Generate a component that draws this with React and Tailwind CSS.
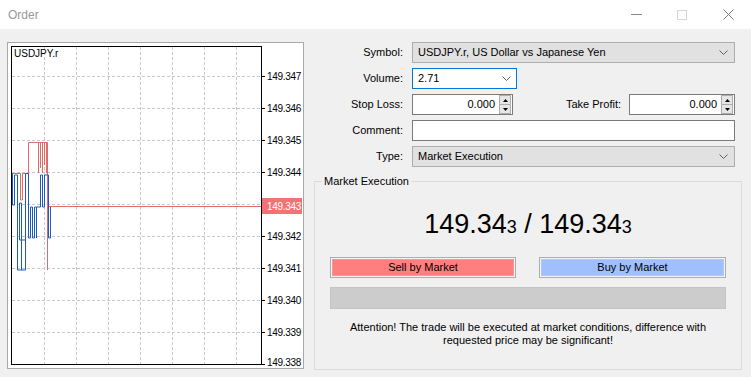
import React from "react";

const levels = ["149.347", "149.346", "149.345", "149.344", "149.343", "149.342", "149.341", "149.340", "149.339"];
const vLines = [36, 68, 100, 132, 164, 196, 228];

const Chevron = () => (
  <svg width="9" height="5" viewBox="0 0 9 5" className="shrink-0">
    <polyline points="0.5,0.5 4.5,4.5 8.5,0.5" fill="none" stroke="#606060" strokeWidth="1" />
  </svg>
);

const Spinner = () => (
  <div className="flex h-[19px] w-[12px] flex-col">
    <div className="flex flex-1 items-center justify-center border border-[#adadad] bg-[#e5e5e5]">
      <svg width="5" height="3" viewBox="0 0 5 3"><polygon points="2.5,0 5,3 0,3" fill="#000" /></svg>
    </div>
    <div className="-mt-px flex flex-1 items-center justify-center border border-[#adadad] bg-[#e5e5e5]">
      <svg width="5" height="3" viewBox="0 0 5 3"><polygon points="0,0 5,0 2.5,3" fill="#000" /></svg>
    </div>
  </div>
);

const Chart = () => (
  <div className="h-[327px] w-[297px] border border-[#a9a9a9] bg-white">
    <svg width="295" height="325" viewBox="0 0 295 325" className="block font-['Liberation_Sans',Arial,sans-serif]">
      {vLines.map((x) => (
        <line key={x} x1={x + 0.5} y1="4" x2={x + 0.5} y2="321" stroke="#c8c8c8" strokeDasharray="3 2" />
      ))}
      {levels.map((lv, i) => (
        <line key={lv} x1="4" y1={33.5 + i * 32} x2="253" y2={33.5 + i * 32} stroke="#c8c8c8" strokeDasharray="3 2" />
      ))}

      {/* ask */}
      <path
        d="M4 130.5 H12.5 V157 H14.5 V130.5 H20.5 V99.5 H39.5 V227 M30.5 99.5 V130 M32.5 99.5 V125 M34.5 99.5 V130 M36.5 99.5 V122 M38.5 99.5 V130 H39.5"
        fill="none"
        stroke="#e06a6a"
      />
      <line x1="39" y1="163.5" x2="254" y2="163.5" stroke="#e06a6a" />

      {/* bid */}
      <path
        d="M4.5 130.5 V162 H6.5 V132 H9.5 V227 H17.5 V197 H11.5 V160 H13.5 V227 M17.5 197 V130.5 H20.5 V195 H22.5 V164 H24.5 V195 H26.5 V164 H28.5 V195 V164 H32.5 V132 H34.5 V164 H36.5 V132 H40.5 V195 H42.5 V164"
        fill="none"
        stroke="#1c5cc0"
      />

      <rect x="3.5" y="3.5" width="250" height="318" fill="none" stroke="#000" />

      <text x="6" y="14" fontSize="10" fill="#000">USDJPY.r</text>

      {levels.map((lv, i) =>
        lv === "149.343" ? null : (
          <g key={lv}>
            <line x1="254" y1={33.5 + i * 32} x2="257" y2={33.5 + i * 32} stroke="#000" />
            <text x="259" y={37 + i * 32} fontSize="10" letterSpacing="-0.3" fill="#000">{lv}</text>
          </g>
        )
      )}
      <line x1="254" y1="321.5" x2="257" y2="321.5" stroke="#000" />
      <text x="259" y="323" fontSize="10" letterSpacing="-0.3" fill="#000">149.338</text>

      <rect x="254" y="155" width="40" height="16" fill="#f07474" />
      <text x="259" y="167" fontSize="10" letterSpacing="-0.3" fill="#fff">149.343</text>
    </svg>
  </div>
);

const Label = ({ children }) => <div className="flex items-center justify-end text-[11px] text-black">{children}</div>;

export default function App() {
  return (
    <div className="h-[377px] w-[751px] overflow-hidden bg-[#f0f0f0] font-['Liberation_Sans',Arial,sans-serif] text-[11px] text-black">
      <div className="flex h-[29px] items-center justify-between bg-white pl-[8px]">
        <span className="text-[12px] text-[#999999]">Order</span>
        <div className="flex h-full items-center">
          <div className="flex w-[46px] justify-center">
            <div className="h-px w-[11px] bg-[#8a8a8a]" />
          </div>
          <div className="flex w-[46px] justify-center">
            <div className="h-[10px] w-[10px] border border-[#d6d6d6]" />
          </div>
          <div className="flex w-[46px] justify-center">
            <svg width="11" height="11" viewBox="0 0 11 11">
              <path d="M0.5 0.5 L10.5 10.5 M10.5 0.5 L0.5 10.5" stroke="#7a7a7a" strokeWidth="1" />
            </svg>
          </div>
        </div>
      </div>

      <div className="flex pl-[7px] pt-[13px]">
        <Chart />

        <div className="ml-[10px] flex w-[429px] flex-col">
          <div className="ml-[-2px] grid w-[423px] grid-cols-[91px_1fr] gap-x-[9px] gap-y-[5px] [grid-auto-rows:21px]">
            <Label>Symbol:</Label>
            <div className="flex items-center justify-between border border-[#adadad] bg-[#e1e1e1] pl-[5px] pr-[6px]">
              <span>USDJPY.r, US Dollar vs Japanese Yen</span>
              <Chevron />
            </div>

            <Label>Volume:</Label>
            <div className="flex w-[105px] items-center justify-between border border-[#0078d7] bg-white pl-[5px] pr-[5px]">
              <span>2.71</span>
              <Chevron />
            </div>

            <Label>Stop Loss:</Label>
            <div className="flex items-center">
              <div className="flex h-full w-[101px] items-center justify-end border border-[#7a7a7a] bg-white pr-[1px]">
                <span className="mr-[4px]">0.000</span>
                <Spinner />
              </div>
              <span className="ml-auto mr-[8px]">Take Profit:</span>
              <div className="flex h-full w-[106px] items-center justify-end border border-[#7a7a7a] bg-white pr-[1px]">
                <span className="mr-[4px]">0.000</span>
                <Spinner />
              </div>
            </div>

            <Label>Comment:</Label>
            <div className="border border-[#7a7a7a] bg-white" />

            <Label>Type:</Label>
            <div className="flex items-center justify-between border border-[#adadad] bg-[#e1e1e1] pl-[5px] pr-[6px]">
              <span>Market Execution</span>
              <Chevron />
            </div>
          </div>

          <fieldset className="mt-[6px] h-[197px] w-[428px] border border-[#dcdcdc] px-[15px]">
            <legend className="ml-[-8px] px-[2px] text-[11px]">Market Execution</legend>
            <div className="mt-[18px] flex h-[32px] items-baseline justify-center text-[27px] leading-[32px] text-black">
              <span>149.34</span>
              <span className="text-[18px]">3</span>
              <span>&nbsp;/&nbsp;149.34</span>
              <span className="text-[18px]">3</span>
            </div>
            <div className="mt-[17px] flex justify-between">
              <div className="h-[21px] w-[186px] border border-[#adadad] bg-[#f4f4f4] p-px">
                <div className="flex h-full items-center justify-center border border-[#f29a9a] bg-[#ff7f7f]">Sell by Market</div>
              </div>
              <div className="h-[21px] w-[187px] border border-[#adadad] bg-[#f4f4f4] p-px">
                <div className="flex h-full items-center justify-center border border-[#b0c8f5] bg-[#9fbfff]">Buy by Market</div>
              </div>
            </div>
            <div className="mt-[9px] h-[22px] border border-[#c4c4c4] bg-[#cccccc]" />
            <p className="mt-[12px] text-center text-[11px] leading-[13px]">
              Attention! The trade will be executed at market conditions, difference with
              <br />
              requested price may be significant!
            </p>
          </fieldset>
        </div>
      </div>
    </div>
  );
}
